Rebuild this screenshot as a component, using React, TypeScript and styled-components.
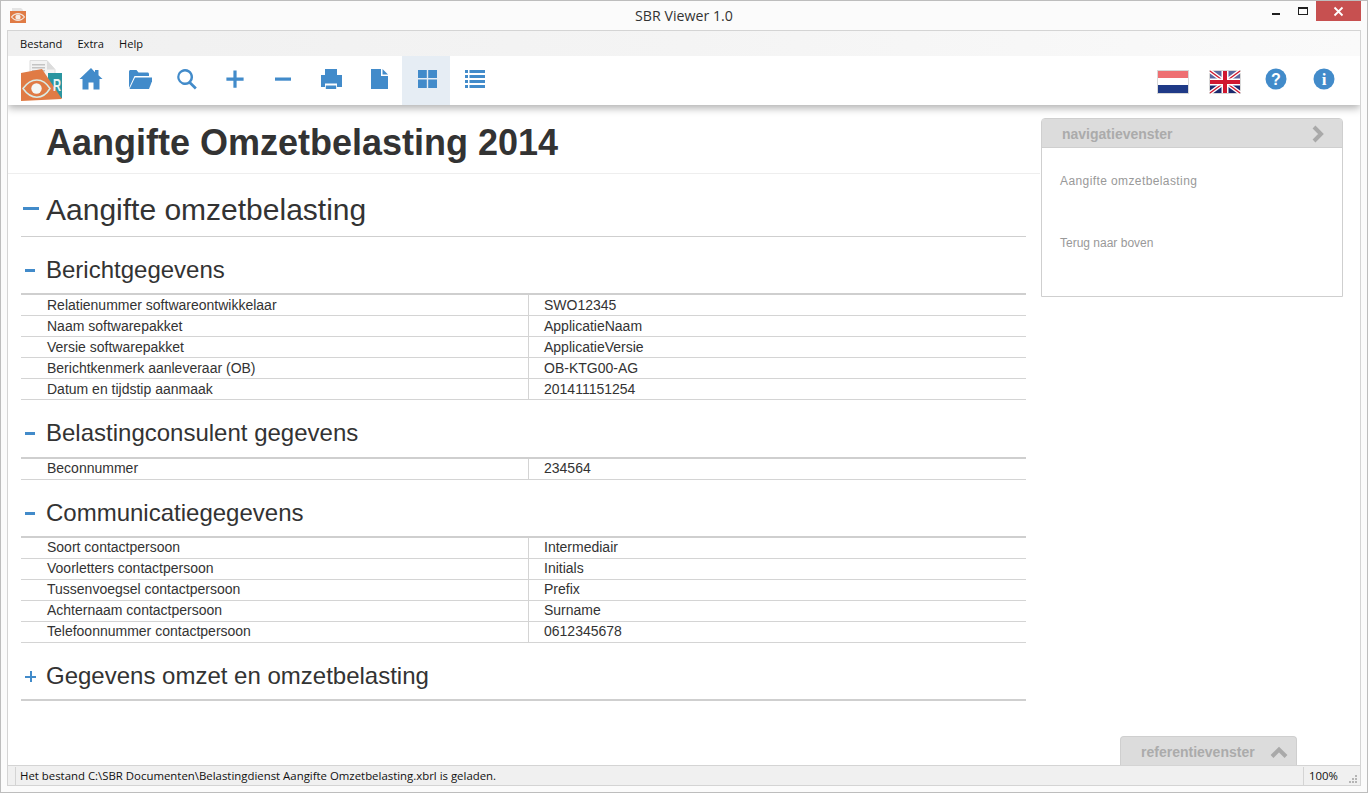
import styled, { createGlobalStyle } from "styled-components";

const BLUE = "#428bca";
const TEXT = "#333333";

const GlobalStyle = createGlobalStyle`
  html, body {
    margin: 0;
    padding: 0;
    width: 100%;
    height: 100%;
    background: #ffffff;
    overflow: hidden;
  }
  #root {
    height: 100%;
  }
`;

const berichtRows = [
  ["Relatienummer softwareontwikkelaar", "SWO12345"],
  ["Naam softwarepakket", "ApplicatieNaam"],
  ["Versie softwarepakket", "ApplicatieVersie"],
  ["Berichtkenmerk aanleveraar (OB)", "OB-KTG00-AG"],
  ["Datum en tijdstip aanmaak", "201411151254"],
];

const consulentRows = [["Beconnummer", "234564"]];

const communicatieRows = [
  ["Soort contactpersoon", "Intermediair"],
  ["Voorletters contactpersoon", "Initials"],
  ["Tussenvoegsel contactpersoon", "Prefix"],
  ["Achternaam contactpersoon", "Surname"],
  ["Telefoonnummer contactpersoon", "0612345678"],
];

function Glyph({ children, size = 24 }: { children: React.ReactNode; size?: number }) {
  return (
    <svg width={size} height={size} viewBox="0 0 24 24" fill={BLUE}>
      {children}
    </svg>
  );
}

function EyeLogo({ small }: { small?: boolean }) {
  if (small) {
    return (
      <svg width="18" height="18" viewBox="0 0 18 18">
        <path d="M3 1h9l2 2v2H3z" fill="#e4e4e4" />
        <rect x="1" y="4" width="16" height="12" fill="#e07b45" />
        <path d="M2.5 10C6 5.5 12 5.5 15.5 10 12 14.5 6 14.5 2.5 10z" fill="none" stroke="#f3e4da" strokeWidth="1.2" />
        <circle cx="9" cy="10" r="2.6" fill="#f6ece6" />
      </svg>
    );
  }
  return (
    <svg width="44" height="44" viewBox="0 0 44 44">
      <path d="M10 0.5h17l8 9V20H10z" fill="#f3f3f3" stroke="#dddddd" />
      <path d="M27 0.5v9h8z" fill="#dcdcdc" />
      <rect x="12" y="4" width="13" height="1.5" fill="#c4c4c4" />
      <rect x="12" y="7" width="13" height="1.5" fill="#c4c4c4" />
      <rect x="12" y="10" width="13" height="1.5" fill="#c4c4c4" />
      <rect x="28" y="13" width="14" height="25" fill="#2a95a0" />
      <path d="M1 13L22 9 42 39 1 41z" fill="#e07b45" />
      <text
        x="33"
        y="31"
        fontFamily="Liberation Sans, sans-serif"
        fontWeight="700"
        fontSize="17"
        textLength="8"
        lengthAdjust="spacingAndGlyphs"
        fill="#e8f4f4"
      >
        R
      </text>
      <path d="M3 28.5C11 17 23 17 30 28.5 23 40 11 40 3 28.5z" fill="none" stroke="#d9ece6" strokeWidth="1.5" />
      <circle cx="16.5" cy="28.5" r="5.2" fill="#f4f7f5" />
    </svg>
  );
}

function DutchFlag() {
  return (
    <svg width="32" height="24" viewBox="0 0 32 24">
      <rect x="0.5" y="0.5" width="31" height="23" fill="#ffffff" stroke="#d8d8d8" />
      <rect x="1" y="1" width="30" height="7" fill="#ee6f72" />
      <rect x="1" y="15" width="30" height="8" fill="#1f3a87" />
    </svg>
  );
}

function UkFlag() {
  return (
    <svg width="32" height="24" viewBox="0 0 32 24">
      <rect x="0.5" y="0.5" width="31" height="23" fill="#1c2a6e" stroke="#d8d8d8" />
      <rect x="1" y="1" width="30" height="8" fill="#5a669e" />
      <path d="M1 1l30 22M31 1L1 23" stroke="#ffffff" strokeWidth="4" />
      <path d="M1 1l30 22M31 1L1 23" stroke="#d0182f" strokeWidth="1.4" />
      <path d="M16 1v22M1 12h30" stroke="#ffffff" strokeWidth="7" />
      <path d="M16 1v22M1 12h30" stroke="#d0182f" strokeWidth="4" />
    </svg>
  );
}

function DataTable({ rows, raised }: { rows: string[][]; raised?: boolean }) {
  return (
    <Table>
      {rows.map(([label, value]) => (
        <Row key={label} $raised={raised}>
          <LabelCell>{label}</LabelCell>
          <ValueCell>{value}</ValueCell>
        </Row>
      ))}
    </Table>
  );
}

export default function App() {
  return (
    <>
      <GlobalStyle />
      <Frame>
        <TitleBar>
          <AppIcon>
            <EyeLogo small />
          </AppIcon>
          <WindowTitle>SBR Viewer 1.0</WindowTitle>
          <WindowControls>
            <MinButton />
            <MaxButton />
            <CloseButton>
              <svg width="11" height="11" viewBox="0 0 11 11">
                <path d="M1.5 1.5l8 8M9.5 1.5l-8 8" stroke="#ffffff" strokeWidth="1.8" />
              </svg>
            </CloseButton>
          </WindowControls>
        </TitleBar>

        <Client>
          <MenuBar>
            <MenuItem>Bestand</MenuItem>
            <MenuItem>Extra</MenuItem>
            <MenuItem>Help</MenuItem>
          </MenuBar>

          <Toolbar>
            <LogoSlot>
              <EyeLogo />
            </LogoSlot>
            <ToolButton>
              <Glyph>
                <path d="M12 1L0.5 12h3v10.5h6v-7h5v7h6V12h3l-4-3.8V3H16v2.2z" />
              </Glyph>
            </ToolButton>
            <ToolButton>
              <svg width="26" height="24" viewBox="-2 0 26 24" fill={BLUE}>
                <path d="M1 21V4.5C1 3.7 1.7 3 2.5 3h6L10.5 5.5h9c.8 0 1.5.7 1.5 1.5v2H6.5z" />
                <path d="M1.5 22L7 10.5h18.5L21 22z" />
              </svg>
            </ToolButton>
            <ToolButton>
              <Glyph>
                <path
                  fillRule="evenodd"
                  d="M10 2a8 8 0 0 1 6.2 13l5.6 5.6-1.9 1.9-5.6-5.6A8 8 0 1 1 10 2zm0 2.4a5.6 5.6 0 1 0 0 11.2 5.6 5.6 0 0 0 0-11.2z"
                />
              </Glyph>
            </ToolButton>
            <ToolButton>
              <Glyph>
                <path d="M10.4 3.5h3.2v7h7v3.2h-7v7h-3.2v-7h-7v-3.2h7z" />
              </Glyph>
            </ToolButton>
            <ToolButton>
              <Glyph>
                <rect x="4" y="10.5" width="16" height="3.2" />
              </Glyph>
            </ToolButton>
            <ToolButton>
              <Glyph>
                <path d="M6 2h12v6h5v12H2V8h4z" />
                <rect x="6" y="16.5" width="12" height="5.5" fill="#ffffff" />
                <rect x="6.8" y="18.5" width="10.4" height="3.5" />
              </Glyph>
            </ToolButton>
            <ToolButton>
              <Glyph>
                <path d="M4 2h10v7h7v13H4z" />
                <path d="M15.5 2l5.5 5.5h-5.5z" />
              </Glyph>
            </ToolButton>
            <ToolButton $active>
              <Glyph>
                <rect x="3" y="3" width="8.8" height="8" />
                <rect x="13.2" y="3" width="8.8" height="8" />
                <rect x="3" y="12.5" width="8.8" height="8.5" />
                <rect x="13.2" y="12.5" width="8.8" height="8.5" />
              </Glyph>
            </ToolButton>
            <ToolButton>
              <Glyph>
                <rect x="2" y="3" width="3" height="3" />
                <rect x="6.5" y="3" width="15.5" height="3" />
                <rect x="2" y="8" width="3" height="3" />
                <rect x="6.5" y="8" width="15.5" height="3" />
                <rect x="2" y="13" width="3" height="3" />
                <rect x="6.5" y="13" width="15.5" height="3" />
                <rect x="2" y="18" width="3" height="3" />
                <rect x="6.5" y="18" width="15.5" height="3" />
              </Glyph>
            </ToolButton>
            <ToolSpacer />
            <FlagButton>
              <DutchFlag />
            </FlagButton>
            <FlagButton>
              <UkFlag />
            </FlagButton>
            <ToolButton>
              <Glyph>
                <circle cx="12" cy="12" r="10.5" />
                <text x="12" y="18" textAnchor="middle" fontFamily="Liberation Sans, sans-serif" fontWeight="700" fontSize="16" fill="#ffffff">
                  ?
                </text>
              </Glyph>
            </ToolButton>
            <ToolButton>
              <Glyph>
                <circle cx="12" cy="12" r="10.5" />
                <text x="12" y="18" textAnchor="middle" fontFamily="Liberation Serif, serif" fontWeight="700" fontSize="17" fill="#ffffff">
                  i
                </text>
              </Glyph>
            </ToolButton>
          </Toolbar>

          <Body>
            <Content>
              <PageTitle>Aangifte Omzetbelasting 2014</PageTitle>
              <Sections>
                <MainHeading>
                  <MinusMark $large />
                  Aangifte omzetbelasting
                </MainHeading>

                <SubHeading>
                  <MinusMark />
                  Berichtgegevens
                </SubHeading>
                <DataTable rows={berichtRows} />

                <SubHeading $tall>
                  <MinusMark />
                  Belastingconsulent gegevens
                </SubHeading>
                <DataTable rows={consulentRows} raised />

                <SubHeading>
                  <MinusMark />
                  Communicatiegegevens
                </SubHeading>
                <DataTable rows={communicatieRows} raised />

                <SubHeading>
                  <PlusMark />
                  Gegevens omzet en omzetbelasting
                </SubHeading>
              </Sections>
            </Content>

            <NavPanel>
              <NavHeader>
                <NavTitle>navigatievenster</NavTitle>
                <svg width="14" height="18" viewBox="0 0 14 18">
                  <path d="M2 2l7 7-7 7" fill="none" stroke="#a9a9a9" strokeWidth="4" />
                </svg>
              </NavHeader>
              <NavBody>
                <NavLink $wide>Aangifte omzetbelasting</NavLink>
                <NavLink>Terug naar boven</NavLink>
              </NavBody>
            </NavPanel>

            <ReferenceTab>
              <NavTitle>referentievenster</NavTitle>
              <svg width="18" height="13" viewBox="0 0 18 13">
                <path d="M2 10.5l7-7 7 7" fill="none" stroke="#a9a9a9" strokeWidth="4" />
              </svg>
            </ReferenceTab>
          </Body>

          <StatusBar>
            <StatusText>Het bestand C:\SBR Documenten\Belastingdienst Aangifte Omzetbelasting.xbrl is geladen.</StatusText>
            <ZoomText>100%</ZoomText>
            <Grip>
              <svg width="9" height="9" viewBox="0 0 9 9" fill="#b5b5b5">
                <rect x="6" y="0" width="2" height="2" />
                <rect x="3" y="3" width="2" height="2" />
                <rect x="6" y="3" width="2" height="2" />
                <rect x="0" y="6" width="2" height="2" />
                <rect x="3" y="6" width="2" height="2" />
                <rect x="6" y="6" width="2" height="2" />
              </svg>
            </Grip>
          </StatusBar>
        </Client>
      </Frame>
    </>
  );
}

const Frame = styled.div`
  width: 1368px;
  height: 793px;
  box-sizing: border-box;
  background: #fbfbfb;
  border: 1px solid #bdbdbd;
  display: flex;
  flex-direction: column;
  padding: 0 6px 6px 6px;
  font-family: "Open Sans", sans-serif;
`;

const TitleBar = styled.div`
  height: 29px;
  flex: none;
  display: flex;
  align-items: flex-start;
  position: relative;
`;

const AppIcon = styled.div`
  margin: 6px 0 0 2px;
  display: flex;
`;

const WindowTitle = styled.div`
  position: absolute;
  left: 0;
  right: 0;
  top: 5px;
  text-align: center;
  font-size: 14.2px;
  line-height: 20px;
  color: #333333;
`;

const WindowControls = styled.div`
  margin-left: auto;
  display: flex;
  align-items: flex-start;
  position: relative;
`;

const MinButton = styled.div`
  width: 8px;
  height: 2px;
  background: #1f1f1f;
  margin: 12px 18px 0 0;
`;

const MaxButton = styled.div`
  width: 8px;
  height: 5px;
  border: 1px solid #1f1f1f;
  border-top-width: 2px;
  margin: 6px 8px 0 0;
`;

const CloseButton = styled.div`
  width: 45px;
  height: 20px;
  background: #c75050;
  display: flex;
  align-items: center;
  justify-content: center;
`;

const Client = styled.div`
  flex: 1;
  min-height: 0;
  display: flex;
  flex-direction: column;
  border: 1px solid #d4d4d4;
  background: #ffffff;
`;

const MenuBar = styled.div`
  height: 25px;
  flex: none;
  display: flex;
  align-items: center;
  gap: 15px;
  padding-left: 12px;
  background: linear-gradient(to right, #f0f0f0 0%, #f4f4f4 50%, #fafafa 100%);
  font-size: 11.1px;
  color: #111111;
`;

const MenuItem = styled.span`
  line-height: 24px;
`;

const Toolbar = styled.div`
  height: 49px;
  flex: none;
  display: flex;
  align-items: stretch;
  padding: 0 13px 0 12px;
  background: #ffffff;
  box-shadow: 0 3px 8px rgba(0, 0, 0, 0.32);
  clip-path: inset(0 0 -14px 0);
  position: relative;
  z-index: 1;
`;

const LogoSlot = styled.div`
  width: 46px;
  display: flex;
  align-items: center;
  flex: none;
  margin-top: 2px;
`;

const ToolButton = styled.div<{ $active?: boolean }>`
  width: 48px;
  flex: none;
  display: flex;
  align-items: center;
  justify-content: center;
  padding: 0 0 3px 2px;
  box-sizing: border-box;
  background: ${({ $active }) => ($active ? "#e6edf4" : "transparent")};
`;

const FlagButton = styled(ToolButton)`
  width: 52px;
  padding: 2px 0 0 0;
`;

const ToolSpacer = styled.div`
  flex: 1;
`;

const Body = styled.div`
  flex: 1;
  min-height: 0;
  display: flex;
  align-items: flex-start;
  position: relative;
  color: ${TEXT};
  font-family: "Liberation Sans", Arial, sans-serif;
`;

const Content = styled.div`
  width: 1032px;
  flex: none;
`;

const PageTitle = styled.h1`
  margin: 0;
  height: 69px;
  box-sizing: border-box;
  border-bottom: 1px solid #eeeeee;
  padding-left: 38px;
  font-size: 36px;
  line-height: 76px;
  font-weight: 700;
  color: ${TEXT};
`;

const Sections = styled.div`
  padding: 0 0 0 13px;
  width: 1005px;
`;

const MainHeading = styled.h2`
  margin: 0;
  height: 63px;
  box-sizing: border-box;
  border-bottom: 1px solid #cfcfcf;
  font-size: 30px;
  font-weight: 400;
  line-height: 71px;
  padding-left: 25px;
  position: relative;
`;

const SubHeading = styled.h3<{ $tall?: boolean }>`
  margin: 0;
  height: ${({ $tall }) => ($tall ? "59px" : "58px")};
  box-sizing: border-box;
  border-bottom: 2px solid #cfcfcf;
  font-size: 24px;
  font-weight: 400;
  line-height: 66px;
  padding-left: 25px;
  position: relative;
`;

const MinusMark = styled.span<{ $large?: boolean }>`
  position: absolute;
  left: ${({ $large }) => ($large ? "2px" : "4px")};
  top: ${({ $large }) => ($large ? "33px" : "32px")};
  width: ${({ $large }) => ($large ? "16px" : "10px")};
  height: 3px;
  background: ${BLUE};
`;

const PlusMark = styled.span`
  position: absolute;
  left: 4px;
  top: 28px;
  width: 11px;
  height: 11px;
  background:
    linear-gradient(${BLUE}, ${BLUE}) center / 100% 2px no-repeat,
    linear-gradient(${BLUE}, ${BLUE}) center / 2px 100% no-repeat;
`;

const Table = styled.div`
  display: flex;
  flex-direction: column;
`;

const Row = styled.div<{ $raised?: boolean }>`
  height: 21px;
  box-sizing: border-box;
  border-bottom: 1px solid #d4d4d4;
  display: flex;
  font-size: 14px;
  line-height: ${({ $raised }) => ($raised ? "18px" : "20px")};
`;

const LabelCell = styled.div`
  width: 508px;
  box-sizing: border-box;
  padding-left: 26px;
  border-right: 1px solid #d4d4d4;
`;

const ValueCell = styled.div`
  padding-left: 15px;
`;

const NavPanel = styled.div`
  width: 302px;
  box-sizing: border-box;
  margin: 13px 0 0 1px;
  border: 1px solid #cfcfcf;
  border-radius: 4px 4px 0 0;
  flex: none;
`;

const NavHeader = styled.div`
  height: 29px;
  box-sizing: border-box;
  background: #dcdcdc;
  border-bottom: 1px solid #cfcfcf;
  display: flex;
  align-items: center;
  justify-content: space-between;
  padding: 1px 16px 0 20px;
`;

const NavTitle = styled.span`
  font-size: 14px;
  font-weight: 700;
  color: #ababab;
`;

const NavBody = styled.div`
  height: 148px;
  box-sizing: border-box;
  padding: 25px 0 0 18px;
  display: flex;
  flex-direction: column;
  gap: 46px;
`;

const NavLink = styled.div<{ $wide?: boolean }>`
  font-size: 12px;
  line-height: 16px;
  color: #999999;
  letter-spacing: ${({ $wide }) => ($wide ? "0.4px" : "0")};
`;

const ReferenceTab = styled.div`
  position: absolute;
  right: 63px;
  bottom: 0;
  width: 177px;
  height: 29px;
  box-sizing: border-box;
  background: #dcdcdc;
  border: 1px solid #cfcfcf;
  border-bottom: none;
  border-radius: 4px 4px 0 0;
  display: flex;
  align-items: center;
  justify-content: space-between;
  padding: 2px 8px 0 20px;
`;

const StatusBar = styled.div`
  height: 20px;
  flex: none;
  box-sizing: border-box;
  border-top: 1px solid #d4d4d4;
  background: #f0f0f0;
  display: flex;
  align-items: center;
  padding-left: 7px;
  font-size: 11.4px;
  color: #111111;
`;

const StatusText = styled.div`
  flex: 1;
  border-left: 1px solid #d4d4d4;
  padding-left: 4px;
  line-height: 18px;
`;

const ZoomText = styled.div`
  width: 39px;
  box-sizing: border-box;
  border-left: 1px solid #d4d4d4;
  padding-left: 5px;
  line-height: 18px;
`;

const Grip = styled.div`
  width: 18px;
  display: flex;
  justify-content: flex-end;
  align-items: flex-end;
  height: 17px;
  padding-right: 2px;
  box-sizing: border-box;
`;
